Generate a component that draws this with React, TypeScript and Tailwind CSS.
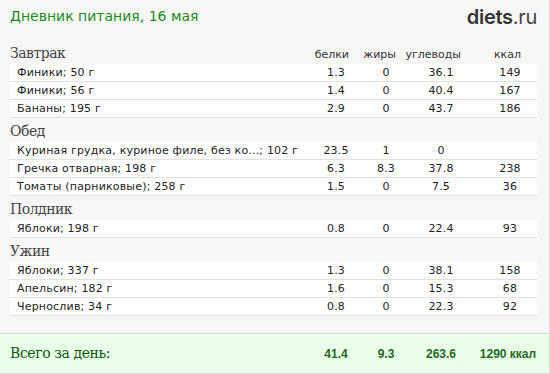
type Item = { name: string; p: string; f: string; c: string; kcal: string };

const meals: { title: string; items: Item[] }[] = [
  {
    title: "Завтрак",
    items: [
      { name: "Финики; 50 г", p: "1.3", f: "0", c: "36.1", kcal: "149" },
      { name: "Финики; 56 г", p: "1.4", f: "0", c: "40.4", kcal: "167" },
      { name: "Бананы; 195 г", p: "2.9", f: "0", c: "43.7", kcal: "186" },
    ],
  },
  {
    title: "Обед",
    items: [
      { name: "Куриная грудка, куриное филе, без ко...; 102 г", p: "23.5", f: "1", c: "0", kcal: "" },
      { name: "Гречка отварная; 198 г", p: "6.3", f: "8.3", c: "37.8", kcal: "238" },
      { name: "Томаты (парниковые); 258 г", p: "1.5", f: "0", c: "7.5", kcal: "36" },
    ],
  },
  {
    title: "Полдник",
    items: [{ name: "Яблоки; 198 г", p: "0.8", f: "0", c: "22.4", kcal: "93" }],
  },
  {
    title: "Ужин",
    items: [
      { name: "Яблоки; 337 г", p: "1.3", f: "0", c: "38.1", kcal: "158" },
      { name: "Апельсин; 182 г", p: "1.6", f: "0", c: "15.3", kcal: "68" },
      { name: "Чернослив; 34 г", p: "0.8", f: "0", c: "22.3", kcal: "92" },
    ],
  },
];

const serif = "font-['DejaVu_Serif',serif]";
const total = "text-center font-['Liberation_Sans',sans-serif] text-[12px] font-bold text-[#1e6a1e]";

function ColumnHeads() {
  return (
    <div className="flex pr-[16px] text-[11px] leading-none text-[#333]">
      <div className="w-[60px] text-right">белки</div>
      <div className="w-[47px] text-right">жиры</div>
      <div className="w-[65px] text-right">углеводы</div>
      <div className="w-[60px] text-right">ккал</div>
    </div>
  );
}

function Row({ item }: { item: Item }) {
  return (
    <div className="grid h-[18px] grid-cols-[1fr_74px_26px_84px_54px] items-center border-b border-[#e2e2e2] bg-white text-[11px] leading-none tracking-[0.18px] text-[#222]">
      <div className="truncate pl-[7px]">{item.name}</div>
      <div className="text-center">{item.p}</div>
      <div className="text-center">{item.f}</div>
      <div className="text-center">{item.c}</div>
      <div className="text-center">{item.kcal}</div>
    </div>
  );
}

export default function App() {
  return (
    <div className="flex h-[374px] w-[550px] flex-col border-r border-b border-[#dcdcdc] bg-[#f7f7f7] font-['DejaVu_Sans',sans-serif]">
      <header className="flex h-[40px] items-start justify-between pt-[7px] pr-[12px] pl-[10px]">
        <h1 className="text-[14px] leading-[18px] text-[#1a8c1a]">Дневник питания, 16 мая</h1>
        <div className="font-['Inter',sans-serif] text-[20px] leading-[20px] tracking-[-0.3px] text-[#333]">
          <span className="font-semibold">diets</span>
          <span className="text-[#444]">.ru</span>
        </div>
      </header>

      <main className="pr-[12px] pl-[10px]">
        {meals.map((meal, i) => (
          <section key={meal.title}>
            <div className="flex h-[24px] items-end justify-between pb-[4px]">
              <h2 className={`${serif} text-[14px] leading-none tracking-[-0.5px] text-[#444]`}>{meal.title}</h2>
              {i === 0 && <ColumnHeads />}
            </div>
            {meal.items.map((item) => (
              <Row key={item.name} item={item} />
            ))}
          </section>
        ))}
      </main>

      <footer className="mt-auto grid h-[40px] grid-cols-[1fr_74px_26px_84px_54px] items-center border-t border-[#dcdcdc] bg-[#eaffea] pr-[12px] pl-[10px]">
        <div className={`${serif} text-[14px] tracking-[-0.4px] text-[#0b5a0b]`}>Всего за день:</div>
        <div className={total}>41.4</div>
        <div className={total}>9.3</div>
        <div className={total}>263.6</div>
        <div className={`${total} -ml-[4px] whitespace-nowrap`}>1290 ккал</div>
      </footer>
    </div>
  );
}
